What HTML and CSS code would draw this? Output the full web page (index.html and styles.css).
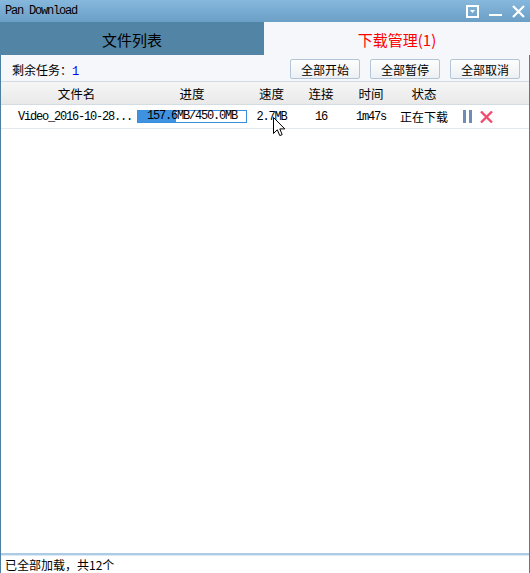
FILE: index.html
```html
<!DOCTYPE html>
<html lang="zh">
<head>
<meta charset="utf-8">
<title>Pan Download</title>
<link rel="stylesheet" href="styles.css">
</head>
<body>
<div class="window">
  <div class="titlebar">
    <span class="title">Pan Download</span>
    <div class="winbtns">
      <svg class="wb" width="13" height="13" viewBox="0 0 13 13"><rect x="1" y="1" width="11" height="11" fill="none" stroke="#fff" stroke-width="2"/><path d="M4 5h5l-2.5 3z" fill="#fff"/></svg>
      <svg class="wb" width="13" height="13" viewBox="0 0 13 13"><rect x="0" y="9" width="13" height="2" fill="#fff"/></svg>
      <svg class="wb" width="13" height="13" viewBox="0 0 13 13"><path d="M1 1L12 12M12 1L1 12" stroke="#fff" stroke-width="2.2"/></svg>
    </div>
  </div>
  <div class="main">
    <div class="tabs">
      <div class="tab tab-off">文件列表</div>
      <div class="tab tab-on">下载管理(1)</div>
    </div>
    <div class="toolbar">
      <span class="remain">剩余任务：<span class="num">1</span></span>
      <div class="btns">
        <button class="btn">全部开始</button>
        <button class="btn">全部暂停</button>
        <button class="btn">全部取消</button>
      </div>
    </div>
    <div class="grid head">
      <div class="c1 h1">文件名</div>
      <div>进度</div>
      <div>速度</div>
      <div>连接</div>
      <div>时间</div>
      <div>状态</div>
      <div></div>
    </div>
    <div class="grid row">
      <div class="c1 mono">Video_2016-10-28...</div>
      <div class="pcell"><div class="bar"><div class="fill" style="width:35%"></div><span class="ptext mono">157.6MB/450.0MB</span></div></div>
      <div class="mono">2.7MB</div>
      <div class="mono">16</div>
      <div class="mono">1m47s</div>
      <div class="state">正在下载</div>
      <div class="acts">
        <svg width="9" height="13" viewBox="0 0 9 13"><rect x="0" y="0" width="3" height="13" fill="#6d8db2"/><rect x="6" y="0" width="3" height="13" fill="#6d8db2"/></svg>
        <svg width="13" height="12" viewBox="0 0 13 12"><path d="M1 0.5L12 11.5M12 0.5L1 11.5" stroke="#ef4d6e" stroke-width="2.4"/></svg>
      </div>
    </div>
    <div class="empty"></div>
    <div class="status">已全部加载，共12个</div>
  </div>
  <svg class="cursor" width="13" height="20" viewBox="0 0 13 20"><path d="M0.5 0.5V16.5L4.3 12.8L6.8 18.6L9.2 17.6L6.8 11.9H11.8Z" fill="#fff" stroke="#000" stroke-width="1"/></svg>
</div>
</body>
</html>
```
FILE: styles.css
```css
* { box-sizing: border-box; }
html, body { margin: 0; padding: 0; }
body {
  width: 530px;
  height: 573px;
  font-family: "Noto Sans CJK SC", "Liberation Sans", sans-serif;
  font-size: 12px;
  color: #000;
  background: #fff;
}
.window {
  position: relative;
  width: 530px;
  height: 573px;
  display: flex;
  flex-direction: column;
}
.titlebar {
  height: 22px;
  flex: none;
  background: linear-gradient(#86b8dd, #6c9fc6);
  display: flex;
  align-items: center;
  justify-content: space-between;
  padding-left: 5px;
  padding-right: 5px;
}
.title {
  font-family: "Liberation Mono", monospace;
  font-size: 12px;
  letter-spacing: -1.2px;
  color: #000;
}
.winbtns { display: flex; gap: 10px; align-items: center; }
.main {
  flex: 1;
  display: flex;
  flex-direction: column;
  border-left: 1px solid #4d7fa2;
  border-right: 1px solid #4d7fa2;
  min-height: 0;
}
.tabs {
  height: 33px;
  flex: none;
  display: grid;
  grid-template-columns: 264px 1fr;
  margin-left: -1px;
  margin-right: -1px;
}
.tab {
  display: flex;
  align-items: center;
  justify-content: center;
  font-size: 15px;
  padding-top: 1px;
}
.tab-off { background: #5284a5; color: #000; }
.tab-on { background: #f5f7fa; color: #f00; }
.toolbar {
  height: 27px;
  flex: none;
  background: #f5f7fa;
  display: flex;
  align-items: center;
  justify-content: space-between;
  padding-left: 11px;
  padding-right: 9px;
  border-bottom: 1px solid #d3dbe3;
}
.remain { padding-top: 3px; }
.num { color: #00f; font-family: "Liberation Mono", monospace; }
.btns { display: flex; gap: 10px; padding-top: 2px; }
.btn {
  width: 70px;
  height: 20px;
  font-family: "Noto Sans CJK SC", sans-serif;
  font-size: 12px;
  color: #000;
  padding: 0;
  border: 1px solid #b3c6d8;
  border-radius: 2px;
  background: linear-gradient(#fdfdfd, #edf0f3);
  line-height: 17px;
}
.grid {
  display: grid;
  grid-template-columns: 136px 110px 49px 50px 50px 56px 1fr;
  align-items: center;
}
.grid > div { text-align: center; }
.head {
  height: 23px;
  flex: none;
  background: linear-gradient(#f6f6f6, #e9e9e9);
  border-bottom: 1px solid #d3dbe3;
  font-size: 12.5px;
}
.head .h1 { padding-left: 15px; }
.row {
  height: 24px;
  flex: none;
  background: #fff;
  border-bottom: 1px solid #e3e8ee;
}
.row .c1 { text-align: left; padding-left: 17px; }
.mono {
  font-family: "Liberation Mono", monospace;
  font-size: 12px;
  letter-spacing: -1.2px;
}
.pcell { display: flex; }
.bar {
  position: relative;
  width: 110px;
  height: 13px;
  border: 1px solid #3a8ede;
  background: #fff;
}
.fill { height: 100%; background: #3e92e0; }
.ptext {
  position: absolute;
  left: 0; right: 0; top: 0; bottom: 0;
  display: flex;
  align-items: center;
  justify-content: center;
  line-height: 11px;
}
.state { font-size: 12px; }
.acts {
  display: flex;
  align-items: center;
  gap: 8px;
  padding-left: 11px;
}
.empty { flex: 1; background: #fff; }
.status {
  height: 20px;
  flex: none;
  border-top: 2px solid #abcce4;
  box-shadow: inset 0 1px 0 #dde9f3;
  padding-left: 4px;
  padding-top: 1px;
  font-size: 12px;
  line-height: 17px;
  background: #fff;
}
.cursor { position: absolute; left: 273px; top: 117px; }
```
